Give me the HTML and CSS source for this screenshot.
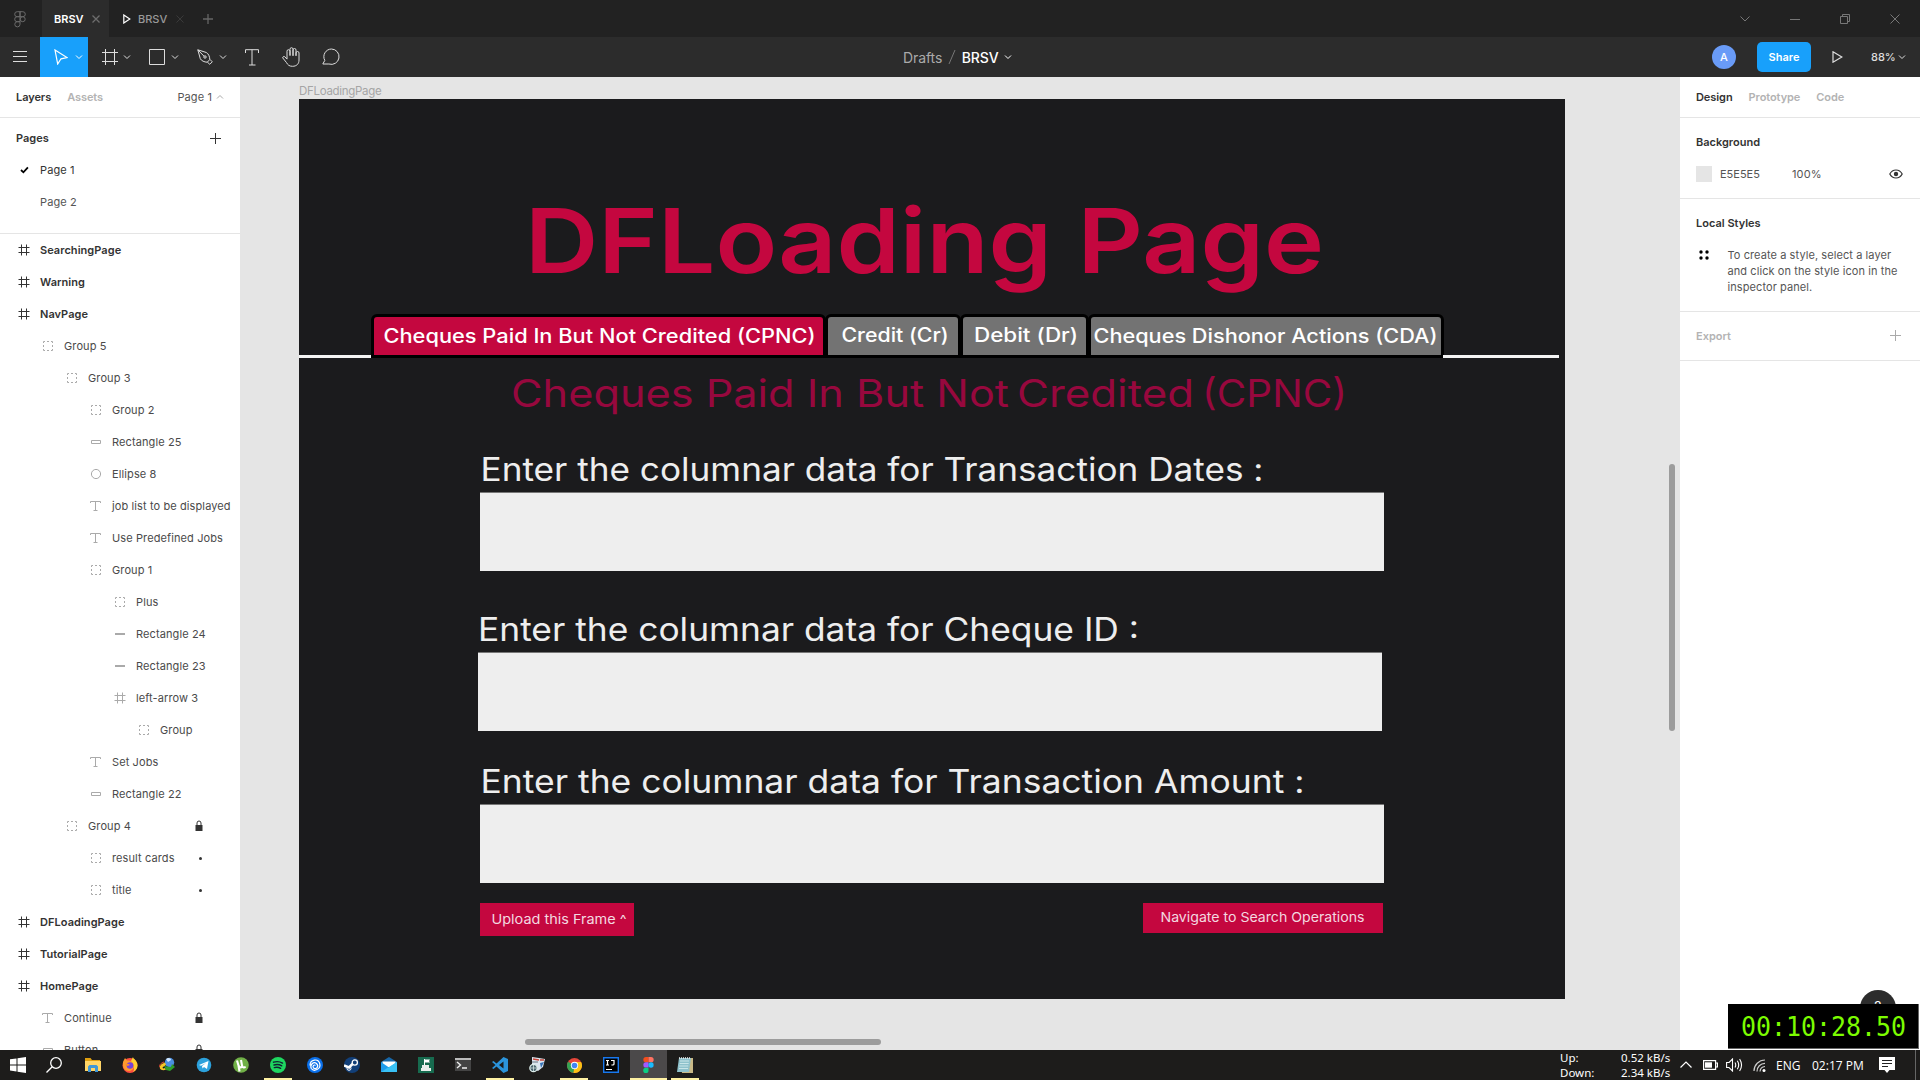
FILE: index.html
```html
<!DOCTYPE html>
<html lang="en">
<head>
<meta charset="utf-8">
<title>BRSV</title>
<link rel="stylesheet" href="styles.css">
</head>
<body>
<svg class="defs" width="0" height="0">
  <symbol id="frame" viewBox="0 0 12 12"><path d="M3.5 .5v11M8.5 .5v11M.5 3.5h11M.5 8.5h11" fill="none" stroke="currentColor"/></symbol>
  <symbol id="group" viewBox="0 0 12 12"><path d="M1.5 3V1.5H3M5 1.5h2M9 1.5h1.500V3M10.500 5v2M10.500 9v1.500H9M7 10.500H5M3 10.500H1.500V9M1.500 7V5" fill="none" stroke="currentColor"/></symbol>
  <symbol id="rect" viewBox="0 0 12 12"><path d="M1.500 4.500h9v3h-9z" fill="none" stroke="currentColor"/></symbol>
  <symbol id="line" viewBox="0 0 12 12"><path d="M1 6h10" fill="none" stroke="currentColor" stroke-width="2"/></symbol>
  <symbol id="ellipse" viewBox="0 0 12 12"><circle cx="6" cy="6" r="4.600" fill="none" stroke="currentColor"/></symbol>
  <symbol id="type" viewBox="0 0 12 12"><path d="M.500 3V1.500h10V3M5.500 1.500v9M3.500 10.500h4" fill="none" stroke="currentColor"/></symbol>
  <symbol id="lock" viewBox="0 0 8 12"><path d="M.500 5h7v6h-7z" fill="currentColor"/><path d="M2 5V3a2 2 0 0 1 4 0v2" fill="none" stroke="currentColor"/></symbol>
  <symbol id="down" viewBox="0 0 8 8"><path d="M1 2.500l3 3 3-3" fill="none" stroke="currentColor"/></symbol>
</svg>

<header class="titlebar">
  <span class="figma-home"><svg width="12" height="17" viewBox="0 0 12 17" fill="none" stroke="#6b6b6b"><path d="M6 .700H3.200a2.500 2.500 0 0 0 0 5H6zM6 5.700H3.200a2.500 2.500 0 0 0 0 5H6zM6 10.700H3.200A2.600 2.600 0 1 0 6 13.300zM6 .700h2.800a2.500 2.500 0 0 1 0 5H6z"/><circle cx="8.700" cy="8.200" r="2.500"/></svg></span>
  <span class="tab active">BRSV<svg width="8" height="8" viewBox="0 0 8 8"><path d="M.500.500l7 7M7.500.500l-7 7" stroke="#6d6d6d" stroke-width="1.300"/></svg></span>
  <span class="tab"><svg class="play" width="8" height="10" viewBox="0 0 8 10"><path d="M.800 1l6 4-6 4z" fill="none" stroke="#fff" stroke-width="1.200"/></svg>BRSV<svg width="8" height="8" viewBox="0 0 8 8"><path d="M.500.500l7 7M7.500.500l-7 7" stroke="#3a3a3a"/></svg></span>
  <svg class="newtab" width="10" height="10" viewBox="0 0 10 10"><path d="M5 0v10M0 5h10" stroke="#666" stroke-width="1.300"/></svg>
  <span class="spacer"></span>
  <span class="winctl"><svg width="12" height="12" viewBox="0 0 12 12"><path d="M1.500 3.500L6 8l4.500-4.500"/></svg></span>
  <span class="winctl"><svg width="12" height="12" viewBox="0 0 12 12"><path d="M1 6.500h10"/></svg></span>
  <span class="winctl"><svg width="12" height="12" viewBox="0 0 12 12"><path d="M1.500 3.500h7v7h-7zM3.500 3.500v-2h7v7h-2"/></svg></span>
  <span class="winctl"><svg width="12" height="12" viewBox="0 0 12 12"><path d="M1.500 1.500l9 9M10.500 1.500l-9 9"/></svg></span>
</header>

<div class="toolbar">
  <span class="tool menu"><svg width="14" height="12" viewBox="0 0 14 12"><path d="M0 .500h14M0 5.500h14M0 10.500h14"/></svg></span>
  <span class="tool move"><svg width="14" height="16" viewBox="0 0 14 16"><path d="M1 1l12 7.500-6 1.300L3.700 15z" stroke-width="1.200"/></svg><svg class="dd" width="8" height="8"><use href="#down"/></svg></span>
  <span class="tool drop"><svg width="16" height="16" viewBox="0 0 16 16"><path d="M3.500 0v16M12.500 0v16M0 3.500h16M0 12.500h16"/></svg><svg class="dd" width="8" height="8"><use href="#down"/></svg></span>
  <span class="tool drop box"><svg width="16" height="16" viewBox="0 0 16 16"><path d="M.500.500h15v15H.500z"/></svg><svg class="dd" width="8" height="8"><use href="#down"/></svg></span>
  <span class="tool drop box"><svg width="16" height="16" viewBox="0 0 16 16"><path d="M.800.800l8.500 2.700c2 1 3.500 4 3.500 7l-2.500 2.700c-3 0-6-1.500-7-3.500zM.800.800L7 7.200M13 10.500l2.300 2.300-2.500 2.500-2.500-2.200"/><circle cx="8" cy="8" r="1.200"/></svg><svg class="dd" width="8" height="8"><use href="#down"/></svg></span>
  <span class="tool text"><svg width="14" height="17" viewBox="0 0 14 17"><path d="M.500 4V.700h13V4M7 .700v15.300M4 16h6.500"/></svg></span>
  <span class="tool hand"><svg width="18" height="20" viewBox="0 0 18 20"><path d="M5 12V4.200a1.500 1.500 0 0 1 3 0V9M8 8V2.200a1.500 1.500 0 0 1 3 0V9M11 8.500V3a1.500 1.500 0 0 1 3 0v6M14 8.500V6a1.400 1.400 0 0 1 3 0v7c0 4-2.500 6.300-6.500 6.300-3.200 0-4.700-1.300-6-3.700L.800 11c-.500-1.300 1.300-2.200 2.300-1L5 12.200"/></svg></span>
  <span class="tool comment"><svg width="18" height="18" viewBox="0 0 18 18"><path d="M9.500 1a7.700 7.700 0 1 1-2.600 15H.800l2-3.600A7.700 7.700 0 0 1 9.500 1z"/></svg></span>
  <span class="crumbs"><span class="drafts">Drafts</span><svg width="8" height="18" viewBox="0 0 8 18"><path d="M1 16L7 2" stroke="#777"/></svg><span class="file">BRSV</span><svg width="8" height="8"><use href="#down"/></svg></span>
  <span class="avatar">A</span>
  <span class="share">Share</span>
  <svg class="present" width="11" height="12" viewBox="0 0 11 12"><path d="M1 .800l8.800 5.200L1 11.200z"/></svg>
  <span class="zoomlevel">88%</span>
  <svg class="zoomdd" width="8" height="8"><use href="#down"/></svg>
</div>

<main class="workspace">
  <aside class="left">
    <div class="ptabs"><b>Layers</b><b class="off">Assets</b><span class="current">Page 1<svg width="8" height="8" viewBox="0 0 8 8"><path d="M1 5.500l3-3 3 3" fill="none" stroke="#aaa"/></svg></span></div>
    <div class="pages">
      <div class="phead"><b>Pages</b><svg width="12" height="12" viewBox="0 0 12 12"><path d="M6.500 1v11M1 6.500h11" stroke="#333"/></svg></div>
      <div class="page"><svg width="10" height="8" viewBox="0 0 10 8"><path d="M1 4l2.400 2.300 4.500-5" fill="none" stroke="#000" stroke-width="1.800"/></svg>Page 1</div>
      <div class="page p2">Page 2</div>
    </div>
    <div class="layers">
      <div class="row top"><svg><use href="#frame"/></svg>SearchingPage</div>
      <div class="row top"><svg><use href="#frame"/></svg>Warning</div>
      <div class="row top"><svg><use href="#frame"/></svg>NavPage</div>
      <div class="row l1"><svg><use href="#group"/></svg>Group 5</div>
      <div class="row l2"><svg><use href="#group"/></svg>Group 3</div>
      <div class="row l3"><svg><use href="#group"/></svg>Group 2</div>
      <div class="row l3"><svg><use href="#rect"/></svg>Rectangle 25</div>
      <div class="row l3"><svg><use href="#ellipse"/></svg>Ellipse 8</div>
      <div class="row l3"><svg><use href="#type"/></svg>job list to be displayed</div>
      <div class="row l3"><svg><use href="#type"/></svg>Use Predefined Jobs</div>
      <div class="row l3"><svg><use href="#group"/></svg>Group 1</div>
      <div class="row l4"><svg><use href="#group"/></svg>Plus</div>
      <div class="row l4"><svg><use href="#line"/></svg>Rectangle 24</div>
      <div class="row l4"><svg><use href="#line"/></svg>Rectangle 23</div>
      <div class="row l4"><svg><use href="#frame"/></svg>left-arrow 3</div>
      <div class="row l5"><svg><use href="#group"/></svg>Group</div>
      <div class="row l3"><svg><use href="#type"/></svg>Set Jobs</div>
      <div class="row l3"><svg><use href="#rect"/></svg>Rectangle 22</div>
      <div class="row l2"><svg><use href="#group"/></svg>Group 4<svg class="lock"><use href="#lock"/></svg></div>
      <div class="row l3"><svg><use href="#group"/></svg>result cards<i class="dot"></i></div>
      <div class="row l3"><svg><use href="#group"/></svg>title<i class="dot"></i></div>
      <div class="row top"><svg><use href="#frame"/></svg>DFLoadingPage</div>
      <div class="row top"><svg><use href="#frame"/></svg>TutorialPage</div>
      <div class="row top"><svg><use href="#frame"/></svg>HomePage</div>
      <div class="row l1"><svg><use href="#type"/></svg>Continue<svg class="lock"><use href="#lock"/></svg></div>
      <div class="row l1"><svg><use href="#rect"/></svg>Button<svg class="lock"><use href="#lock"/></svg></div>
    </div>
  </aside>

  <section class="canvas">
    <div class="framename">DFLoadingPage</div>
    <div class="artboard">
      <svg class="heading"><text x="226" y="174" textLength="799" lengthAdjust="spacingAndGlyphs">DFLoading Page</text></svg>
      <div class="navtabs">
        <i class="rule"></i>
        <svg class="ntab on" width="455"><text x="12.500" y="29" textLength="432" lengthAdjust="spacingAndGlyphs">Cheques Paid In But Not Credited (CPNC)</text></svg>
        <svg class="ntab" width="136"><text x="16.500" y="28" textLength="107" lengthAdjust="spacingAndGlyphs">Credit (Cr)</text></svg>
        <svg class="ntab" width="129"><text x="14" y="28" textLength="104" lengthAdjust="spacingAndGlyphs">Debit (Dr)</text></svg>
        <svg class="ntab" width="356"><text x="5.500" y="29" textLength="344" lengthAdjust="spacingAndGlyphs">Cheques Dishonor Actions (CDA)</text></svg>
        <i class="rule end"></i>
      </div>
      <svg class="subheading"><text y="49"><tspan x="212" textLength="498" lengthAdjust="spacingAndGlyphs">Cheques Paid In But Not</tspan> <tspan x="718" textLength="177" lengthAdjust="spacingAndGlyphs">Credited</tspan> <tspan x="903" textLength="145" lengthAdjust="spacingAndGlyphs">(CPNC)</tspan></text></svg>
      <div class="field">
        <svg><text x=".500" y="33" textLength="783" lengthAdjust="spacingAndGlyphs">Enter the columnar data for Transaction Dates :</text></svg>
        <div class="input"></div>
      </div>
      <div class="field second">
        <svg><text x="0" y="33" textLength="661" lengthAdjust="spacingAndGlyphs">Enter the columnar data for Cheque ID :</text></svg>
        <div class="input"></div>
      </div>
      <div class="field third">
        <svg><text x=".500" y="33" textLength="824" lengthAdjust="spacingAndGlyphs">Enter the columnar data for Transaction Amount :</text></svg>
        <div class="input"></div>
      </div>
      <div class="actions">
        <svg class="btn" width="154" height="33"><text x="11.500" y="20.500" textLength="135" lengthAdjust="spacingAndGlyphs">Upload this Frame ^</text></svg>
        <svg class="btn" width="240" height="30"><text x="17.500" y="19" textLength="204" lengthAdjust="spacingAndGlyphs">Navigate to Search Operations</text></svg>
      </div>
    </div>
    <i class="vscroll"></i>
    <i class="hscroll"></i>
  </section>

  <aside class="right">
    <div class="ptabs"><b>Design</b><b class="off">Prototype</b><b class="off">Code</b></div>
    <div class="sec bg">
      <b>Background</b>
      <div class="fill"><i></i><span class="hex">E5E5E5</span><span class="pct">100%</span><svg width="14" height="10" viewBox="0 0 14 10"><path d="M.800 5C2.300 2.200 4.500 1 7 1s4.700 1.200 6.200 4C11.700 7.800 9.500 9 7 9S2.300 7.800.800 5z" fill="none" stroke="#333" stroke-width="1.200"/><circle cx="7" cy="5" r="2.200" fill="#333"/></svg></div>
    </div>
    <div class="sec styles">
      <b>Local Styles</b>
      <div class="hint"><svg width="10" height="10" viewBox="0 0 10 10"><circle cx="2" cy="2" r="1.700"/><circle cx="8" cy="2" r="1.700"/><circle cx="2" cy="8" r="1.700"/><circle cx="8" cy="8" r="1.700"/></svg><p>To create a style, select a layer<br>and click on the style icon in the<br>inspector panel.</p></div>
    </div>
    <div class="sec export"><b>Export</b><svg width="12" height="12" viewBox="0 0 12 12"><path d="M6.500 1v11M1 6.500h11" stroke="#aaa"/></svg></div>
  </aside>
</main>

<footer class="taskbar">
  <span class="app sys"><svg width="16" height="16" viewBox="0 0 16 16" fill="#fff"><path d="M0 2.300L6.500 1.400V7.500H0zM7.500 1.200L16 0v7.500H7.500zM0 8.500h6.500v6L0 13.600zM7.500 8.500H16V16l-8.500-1.200z"/></svg></span>
  <span class="app sys"><svg width="16" height="16" viewBox="0 0 16 16" fill="none" stroke="#fff" stroke-width="1.300"><circle cx="10" cy="6" r="5.300"/><path d="M6.200 9.800L.500 15.500"/></svg></span>
  <span class="app first"><svg width="16" height="16" viewBox="0 0 16 16"><path d="M0 1h5.500l1.500 2h8v3H0z" fill="#e0a010"/><path d="M0 4h16v10H0z" fill="#ffd567"/><path d="M3 15V9.500L4.500 8h7L13 9.500V15h-3v-4H6v4z" fill="#3f97d6"/></svg></span>
  <span class="app"><svg width="16" height="16" viewBox="0 0 16 16"><circle cx="8" cy="8.500" r="7.500" fill="#ff4f40"/><path d="M11 0c0 2 4.500 3 4.500 8.500 0 3-2 5.500-4.500 6.500 3-4-1-9-2-11z" fill="#ffd02f"/><path d="M1 5L3 1l2 2.500c4 0 7 2 7 5.500s-3 5-5 5c-4 0-6-3-6-6z" fill="#ff9a2c"/><circle cx="8" cy="8.500" r="3.300" fill="#7542d8"/><path d="M3 7c2-.500 4 0 5 1L5.500 9z" fill="#ff8a2a"/></svg></span>
  <span class="app"><svg width="16" height="16" viewBox="0 0 16 16"><circle cx="10.500" cy="5.500" r="4.700" fill="#4a8fe0"/><path d="M7 2c2-2 5-1 5 1L9 5z" fill="#d4e8ff"/><path d="M6 5.500c-3 1-6 3-5 6 1 2 4 2 6 1L6 11c-2 1-3 0-2-1l3-2z" fill="#f5c626"/><path d="M5 5C2 6 0 8 .500 10" fill="none" stroke="#df4a33"/><path d="M5 9l7 1 1-3 3 3-5 4-4-1z" fill="#2f9e2c"/></svg></span>
  <span class="app"><svg width="16" height="16" viewBox="0 0 16 16"><circle cx="8" cy="8" r="7.300" fill="#2ca1dc"/><path d="M3 8l9.500-4L11 12 8 10l-1.500 1.500L6 9l4-3-5 2.700z" fill="#fff"/></svg></span>
  <span class="app"><svg width="16" height="16" viewBox="0 0 16 16"><circle cx="8" cy="8" r="7.800" fill="#70b047"/><path d="M4 3.500l1.500 5C6 11 9.500 11 9 8.500L8 3M9 8.500c.500 2.500 2.500 2.500 3.500 1M5.500 8.500l1 6" fill="none" stroke="#fff" stroke-width="2.100"/></svg></span>
  <span class="app run"><svg width="16" height="16" viewBox="0 0 16 16"><circle cx="8" cy="8" r="8" fill="#1ed760"/><path d="M3.500 5.200c3-.900 6.500-.600 9 .900M4 8c2.500-.700 5.500-.500 7.700.800M4.300 10.600c2.200-.600 4.500-.400 6.300.700" fill="none" stroke="#123" stroke-width="1.400" stroke-linecap="round"/></svg></span>
  <span class="app"><svg width="16" height="16" viewBox="0 0 16 16"><circle cx="8" cy="8" r="8" fill="#0b70ea"/><path d="M3 8.500C3 2 11.500 1 12.800 7 14 12 7 15.300 4.300 11.500 2.500 8 6.500 4 9.500 6.500c3 2.800-.500 6.500-3 4.500-1.500-2 1-4 2-2.500" fill="none" stroke="#fff" stroke-width="1.200"/></svg></span>
  <span class="app"><svg width="16" height="16" viewBox="0 0 16 16"><circle cx="8" cy="8" r="8" fill="#123f78"/><path d="M0 8.500l5 2L8.500 7" fill="none" stroke="#fff" stroke-width="2.500"/><circle cx="10.800" cy="5.500" r="2.600" fill="#123f78" stroke="#fff" stroke-width="1.300"/><circle cx="5" cy="11.300" r="2" fill="none" stroke="#fff"/></svg></span>
  <span class="app"><svg width="16" height="16" viewBox="0 0 16 16"><path d="M0 5l8-5 8 5v3H0z" fill="#1767a8"/><path d="M1.500 4.500h13V10h-13z" fill="#fff"/><path d="M0 5l8 5.500L16 5v10H0z" fill="#1f9cec"/><path d="M0 15L16 5v10z" fill="#39c1f5"/></svg></span>
  <span class="app"><svg width="16" height="16" viewBox="0 0 16 16"><path d="M0 0h16v16H0z" fill="#176b4f"/><path d="M6.500 2v7" stroke="#fff"/><path d="M7 2.500h5L11 4l1 1.500H7z" fill="#fff"/><path d="M4 8h7v3h2v3H3v-3h1z" fill="#e8eeeb"/></svg></span>
  <span class="app"><svg width="16" height="14" viewBox="0 0 16 14"><path d="M0 0h16v13H0z" fill="#444"/><path d="M0 0h16v2H0z" fill="#bbb"/><path d="M2 4l3.500 3L2 10M7 10h5" fill="none" stroke="#eee" stroke-width="1.400"/></svg></span>
  <span class="app run"><svg width="16" height="16" viewBox="0 0 16 16"><path d="M11.500 0L16 2v12l-4.500 2-7-6.500-3 2.500L0 11l3.500-3L0 5l1.500-1 3 2.500zM11.500 4.500L7 8l4.500 3.500z" fill="#2b94db" fill-rule="evenodd"/></svg></span>
  <span class="app"><svg width="17" height="16" viewBox="0 0 17 16"><path d="M3 0l7 1 6 1-2 8-5 4-6-3z" fill="#dce6f0"/><path d="M4 2l6 1M11 3l4 0" stroke="#c8473b" stroke-width="1.500"/><path d="M11 6l4-1-3 6z" fill="#3974b7"/><path d="M3 5h6" stroke="#64747f"/><circle cx="4.500" cy="11" r="3.700" fill="#4c6670" stroke="#dff0ed" stroke-width="1.200"/><path d="M4.500 8v6M1.500 11h6" stroke="#dff0ed" stroke-width=".700"/></svg></span>
  <span class="app run"><svg width="15" height="15" viewBox="0 0 16 16"><circle cx="8" cy="8" r="8" fill="#e6463a"/><path d="M8 8L1.070 4A8 8 0 0 0 7 15.900z" fill="#34a353"/><path d="M8 8l-1 7.900A8 8 0 0 0 15 4.200H8z" fill="#fbc116"/><circle cx="8" cy="8" r="3.900" fill="#fff"/><circle cx="8" cy="8" r="3" fill="#4285f4"/></svg></span>
  <span class="app"><svg width="16" height="16" viewBox="0 0 16 16"><path d="M.700.700h14.600v14.600H.700z" fill="#000" stroke="#1878ee" stroke-width="1.400"/><path d="M3 3.500h3M4.500 3.500V8M3 8h3M8 3.500h3V7c0 1-1.500 1.300-2.500.700M3 12.500h6" fill="none" stroke="#fff" stroke-width="1.200"/></svg></span>
  <span class="app run focus"><svg width="11" height="16" viewBox="0 0 11 16"><path d="M5.500 0H3a2.650 2.650 0 0 0 0 5.300h2.500z" fill="#f24e1e"/><path d="M5.500 0H8a2.650 2.650 0 0 1 0 5.300H5.500z" fill="#ff7262"/><path d="M5.500 5.300H3a2.650 2.650 0 0 0 0 5.300h2.500z" fill="#a259ff"/><circle cx="8" cy="8" r="2.650" fill="#1abcfe"/><path d="M5.500 10.700H3A2.650 2.650 0 1 0 5.500 13.300z" fill="#0acf83"/></svg></span>
  <span class="app run"><svg width="16" height="16" viewBox="0 0 16 16"><path d="M3 1h13v15H5z" fill="#c9b987"/><path d="M2 1h12l-2 14H0z" fill="#8fc2cc"/><path d="M3 4h9M2.700 6.500h9M2.300 9h9M2 11.500h9" stroke="#c8e5e8"/><path d="M2 1h12" stroke="#eee" stroke-width="1.500" stroke-dasharray="1 1"/></svg></span>
  <span class="spacer"></span>
  <div class="net"><span>Up:</span><span>0.52 kB/s</span><span>Down:</span><span>2.34 kB/s</span></div>
  <div class="tray">
    <svg width="12" height="8" viewBox="0 0 12 8"><path d="M.500 6.500L6 1l5.500 5.500" fill="none" stroke="#fff" stroke-width="1.200"/></svg>
    <svg class="battery" width="15" height="10" viewBox="0 0 15 10"><path d="M.600.600h12v8.800H.600zM13 3h1.500v4H13" fill="none" stroke="#fff" stroke-width="1.200"/><path d="M2 2.300h7v5.400H2z" fill="#fff"/></svg>
    <svg class="sound" width="17" height="14" viewBox="0 0 17 14"><path d="M.600 4.500h2.500L6.500 1v12L3 9.500H.600zM9 4.500q1.500 2.500 0 5M11.300 2.700q2.800 4.300 0 8.600M13.600 1q3.900 6 0 12" fill="none" stroke="#fff" stroke-width="1.100"/></svg>
    <svg class="wifi" width="13" height="13" viewBox="0 0 13 13"><path d="M1 12A11 11 0 0 1 12 1M4 12.500A8 8 0 0 1 12 4.300M7 12.500A5.500 5.500 0 0 1 12 7.500" fill="none" stroke="#ccc" stroke-width="1.200"/><circle cx="11" cy="11.500" r="1.500" fill="#fff"/></svg>
    <span class="lang">ENG</span><span class="time">02:17 PM</span>
    <svg class="note" width="16" height="16" viewBox="0 0 16 16"><path d="M0 0h16v13h-5.500L8 16l-2.500-3H0z" fill="#fff"/><path d="M3 3.500h10M3 6.500h10M3 9.500h6" stroke="#222"/></svg>
    <i class="peek"></i>
  </div>
</footer>

<div class="help">?</div>
<svg class="timer"><text x="13" y="28" textLength="165" lengthAdjust="spacingAndGlyphs">00:10:28.50</text></svg>
</body>
</html>
```
FILE: styles.css
```css
* { box-sizing: border-box; }
body {
  margin: 0; width: 1920px; height: 1080px; overflow: hidden; position: relative;
  display: flex; flex-direction: column;
  font-family: Inter, "Liberation Sans", sans-serif; font-size: 11px; letter-spacing: .11px; color: #333;
}
svg { display: block; flex: none; }
b { font-weight: 600; letter-spacing: 0; }
.defs { position: absolute; }
.spacer { flex: 1; }

.titlebar { height: 37px; background: #222; display: flex; align-items: center; flex: none; }
.figma-home { width: 42px; padding: 1px 0 0 14px; }
.tab { height: 37px; display: flex; align-items: center; gap: 9px; padding: 0 9px 0 14px; width: 75px; color: #999; font-weight: 500; letter-spacing: 0; }
.tab.active { width: 67px; padding-left: 12px; background: #2c2c2c; color: #fff; font-weight: 600; gap: 8px; }
.tab .play { margin-right: -2px; }
.newtab { margin: 1px 0 0 19px; }
.winctl { width: 50px; display: flex; justify-content: center; }
.winctl svg { fill: none; stroke: #777; }

.toolbar { height: 40px; background: #2c2c2c; display: flex; align-items: center; flex: none; color: #fff; }
.tool { height: 40px; width: 48px; display: flex; align-items: center; fill: none; stroke: #ddd; flex: none; }
.tool .dd { margin-left: 7px; stroke: none; color: #ddd; }
.menu { width: 40px; padding-left: 13px; }
.move { background: #18a0fb; padding-left: 14px; stroke: #fff; }
.move .dd { color: #fff; margin-left: 7px; }
.drop { padding-left: 14px; }
.drop .dd { margin-left: 5px; }
.box { padding-left: 13px; }
.box .dd { margin-left: 6px; }
.text { padding-left: 13px; width: 40px; }
.hand { width: 40px; padding-left: 10px; }
.comment { width: 40px; padding-left: 10px; }
.crumbs { margin-left: 551px; width: 809px; display: flex; align-items: center; font-size: 14px; letter-spacing: -.1px; }
.drafts { color: #aaa; margin-right: 6px; }
.file { font-weight: 500; margin: 0 5px 0 5.5px; }
.avatar { width: 24px; height: 24px; border-radius: 50%; background: #699bf7; text-align: center; line-height: 24px; font-weight: 500; }
.share { margin-left: 21px; width: 54px; height: 30px; border-radius: 5px; background: #18a0fb; text-align: center; line-height: 30px; font-weight: 600; letter-spacing: 0; }
.present { margin-left: 21px; fill: none; stroke: #ddd; stroke-width: 1.2; }
.zoomlevel { margin-left: 28px; width: 22px; color: #ddd; font-weight: 500; letter-spacing: 0; }
.zoomdd { margin-left: 5px; color: #ddd; }

.workspace { height: 973px; display: flex; flex: none; overflow: hidden; }
.left { width: 240px; background: #fff; overflow: hidden; }
.ptabs { height: 41px; border-bottom: 1px solid #e5e5e5; padding: 0 16px; display: flex; align-items: center; gap: 16px; }
.ptabs b { letter-spacing: -.07px; }
.off { color: #b3b3b3; }
.current { margin-left: auto; display: flex; gap: 4px; align-items: center; color: #555; }
.pages { height: 116px; border-bottom: 1px solid #e5e5e5; }
.phead { height: 36px; display: flex; align-items: center; justify-content: space-between; padding: 3px 19px 0 16px; }
.page { height: 32px; padding: 0 0 0 20px; display: flex; align-items: center; gap: 10px; }
.p2 { padding-left: 40px; color: #555; }
.row { height: 32px; display: flex; align-items: center; gap: 10px; padding-left: 18px; color: #4a4a4a; }
.row svg { width: 12px; height: 12px; color: #aaa; }
.row.top { font-weight: 600; color: #333; letter-spacing: .05px; }
.row.top svg { color: #333; }
.l1 { padding-left: 42px; }
.l2 { padding-left: 66px; }
.l3 { padding-left: 90px; }
.l4 { padding-left: 114px; }
.l5 { padding-left: 138px; }
.row .lock { width: 8px; color: #333; margin: 0 37px 0 auto; }
.dot { width: 3px; height: 3px; border-radius: 50%; background: #333; margin: 1px 38px 0 auto; }

.canvas { width: 1440px; background: #e5e5e5; position: relative; padding-left: 59px; }
.framename { height: 22px; font-size: 11.5px; line-height: 29px; color: #a5a5a5; letter-spacing: -.3px; }
.artboard { width: 1266px; height: 900px; background: #1b1b1d; display: flex; flex-direction: column; align-items: flex-start; }
.artboard svg { overflow: visible; }
.heading { width: 100%; height: 215px; font-size: 90px; font-weight: 580; fill: #c4073f; letter-spacing: 0; }
.navtabs { height: 44px; display: flex; align-items: flex-end; width: 1260px; }
.rule { height: 3px; background: #f4f4f4; width: 72px; }
.rule.end { flex: 1; }
.ntab { height: 44px; background: #737373; border: 3px solid #000; border-radius: 6px 6px 0 0; margin-right: -1px; }
.ntab text { transform: translate(-3px, -3px); font-size: 19.5px; font-weight: 540; fill: #fff; letter-spacing: 0; }
.ntab.on { background: #c4073f; }
.subheading { width: 100%; height: 90px; font-size: 37.6px; fill: #97083e; font-weight: 400; letter-spacing: 0; }
.field { margin-left: 181px; height: 123px; }
.field svg { height: 44px; width: 904px; font-size: 32px; fill: #eee; letter-spacing: 0; }
.input { width: 904px; height: 79px; background: #eee; border-top: 1px solid #777; }
.second { margin: 37px 0 0 179px; }
.third { margin-top: 29px; }
.actions { margin: 20px 0 0 181px; width: 903px; display: flex; justify-content: space-between; align-items: flex-start; }
.btn { background: #c4073f; font-size: 13.3px; fill: #f3d9e0; letter-spacing: 0; }
.vscroll, .hscroll { position: absolute; background: #9c9c9c; border-radius: 3px; }
.vscroll { left: 1429px; top: 387px; width: 6px; height: 267px; }
.hscroll { left: 285px; top: 962px; width: 356px; height: 6px; }

.right { width: 240px; background: #fff; }
.sec { border-bottom: 1px solid #e5e5e5; padding: 17px 16px 0; }
.bg { height: 81px; }
.fill { display: flex; align-items: center; margin-top: 17px; color: #555; }
.fill i { width: 16px; height: 16px; background: #e5e5e5; margin-right: 8px; }
.hex { width: 72px; letter-spacing: 0; }
.pct { flex: 1; }
.fill svg { margin-right: 1px; }
.styles { height: 113px; }
.hint { display: flex; gap: 19px; margin: 17px 0 0 2.5px; color: #555; }
.hint svg { margin-top: 3px; }
.hint p { margin: 0; line-height: 16px; letter-spacing: .08px; white-space: nowrap; }
.export { height: 49px; display: flex; justify-content: space-between; color: #b3b3b3; padding-right: 19px; }

.taskbar { height: 30px; background: #1d1c1b; display: flex; flex: none; color: #fff; letter-spacing: 0; }
.app { width: 37px; height: 30px; display: flex; align-items: center; justify-content: center; flex: none; position: relative; }
.sys { width: 36px; }
.first { margin-left: 2.5px; }
.run::after { content: ""; position: absolute; left: 4.5px; bottom: 0; width: 28px; height: 2px; background: #fff2a4; }
.focus { background: #4b494a; }
.focus::after { left: 0; width: 37px; }
.net { display: grid; grid-template-columns: 61px 50px; grid-template-rows: 15px 15px; font: 11.5px/16px "Noto Sans", sans-serif; margin-right: 9px; white-space: nowrap; }
.tray { display: flex; align-items: center; width: 240px; font: 12px "Open Sans", sans-serif; }
.battery { margin-left: 11px; }
.sound { margin-left: 8px; }
.wifi { margin-left: 10px; }
.lang { margin-left: 10px; width: 23px; }
.time { margin-left: 13px; width: 49px; white-space: nowrap; }
.note { margin-left: 18px; }
.peek { width: 1px; height: 30px; background: #666; margin-left: 20px; }

.help { position: absolute; left: 1860px; top: 990px; width: 36px; height: 36px; border-radius: 50%; background: #2c2c2c; color: #fff; text-align: center; font-size: 14px; line-height: 34px; }
.timer { position: absolute; left: 1728px; top: 1004px; width: 191px; height: 45px; background: #000; border: solid #666; border-width: 0 1px 1px 0; font: 26px "DejaVu Sans Mono", monospace; letter-spacing: 0; fill: #7cfc00; }
.timer text { transform: translateY(4px); }
```
